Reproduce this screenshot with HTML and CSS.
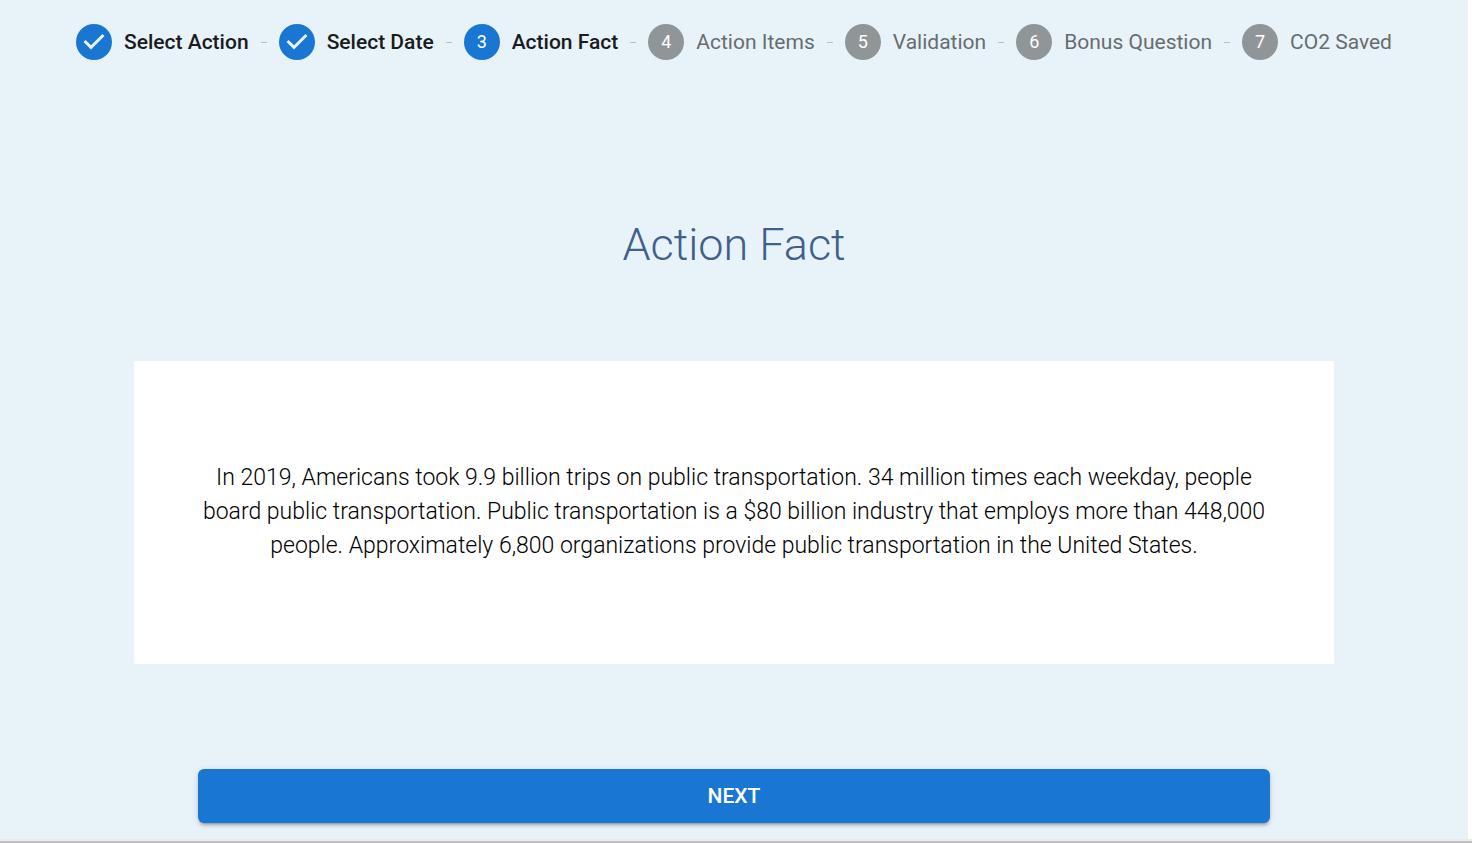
FILE: index.html
```html
<!DOCTYPE html>
<html lang="en">
<head>
<meta charset="utf-8">
<meta name="viewport" content="width=device-width, initial-scale=1">
<title>Action Fact</title>
<link rel="stylesheet" href="styles.css">
</head>
<body>
<div class="page">
  <ol class="stepper">
    <li class="step done">
      <svg class="badge" viewBox="0 0 24 24" role="img" aria-label="Completed"><path d="M12 0a12 12 0 1 0 0 24 12 12 0 0 0 0-24zm-2 17l-5-5 1.400-1.400 3.600 3.600 7.600-7.600L19 8l-9 9z"/></svg>
      <span class="label">Select Action</span>
    </li>
    <li class="connector" aria-hidden="true"></li>
    <li class="step done">
      <svg class="badge" viewBox="0 0 24 24" role="img" aria-label="Completed"><path d="M12 0a12 12 0 1 0 0 24 12 12 0 0 0 0-24zm-2 17l-5-5 1.400-1.400 3.600 3.600 7.600-7.600L19 8l-9 9z"/></svg>
      <span class="label">Select Date</span>
    </li>
    <li class="connector" aria-hidden="true"></li>
    <li class="step active" aria-current="step"><span class="badge number">3</span><span class="label">Action Fact</span></li>
    <li class="connector" aria-hidden="true"></li>
    <li class="step"><span class="badge number">4</span><span class="label">Action Items</span></li>
    <li class="connector" aria-hidden="true"></li>
    <li class="step"><span class="badge number">5</span><span class="label">Validation</span></li>
    <li class="connector" aria-hidden="true"></li>
    <li class="step"><span class="badge number">6</span><span class="label">Bonus Question</span></li>
    <li class="connector" aria-hidden="true"></li>
    <li class="step"><span class="badge number">7</span><span class="label">CO2 Saved</span></li>
  </ol>
  <main class="content">
    <h1 class="title">Action Fact</h1>
    <section class="card">
      <p class="fact">In 2019, Americans took 9.9 billion trips on public transportation. 34 million times each weekday, people board public transportation. Public transportation is a $80 billion industry that employs more than 448,000 people. Approximately 6,800 organizations provide public transportation in the United States.</p>
    </section>
    <div class="actions"><button class="next" type="button">NEXT</button></div>
  </main>
</div>
<footer class="edge"></footer>
</body>
</html>
```
FILE: styles.css
```css
* { box-sizing: border-box; }
body {
  margin: 0;
  background: #fff;
  font-family: Roboto, "Liberation Sans", sans-serif;
}
.page {
  margin-right: 4px;
  padding: 24px 64px 16px;
  background: #e8f3f9;
}
.stepper {
  display: flex;
  align-items: center;
  margin: 0;
  padding: 0;
  list-style: none;
}
.step {
  display: flex;
  align-items: center;
  gap: 12px;
  padding: 0 12px;
  color: #666c6f;
  font-size: 21px;
  font-weight: 400;
  line-height: 30px;
  white-space: nowrap;
}
.done, .active { color: #1a1b1c; font-weight: 500; }
.badge { flex: none; width: 36px; height: 36px; }
svg.badge { display: block; fill: #1976d2; }
.number {
  display: flex;
  align-items: center;
  justify-content: center;
  border-radius: 50%;
  background: #909698;
  color: #fff;
  font-size: 18px;
  font-weight: 400;
}
.active .number { background: #1976d2; }
.connector { flex: 1; height: 1px; background: #bdbdbd; }
.content { max-width: 1200px; margin: 0 auto; text-align: center; }
.title {
  margin: 0;
  padding: 158px 0 90px;
  color: #415f8c;
  font-size: 45px;
  font-weight: 300;
  line-height: 53px;
}
.card { padding: 100px 64px 101px; background: #fff; }
.fact {
  margin: 0;
  color: #000;
  font-size: 23px;
  font-weight: 300;
  line-height: 34px;
}
.actions { padding: 105px 64px 0; }
.next {
  display: block;
  width: 100%;
  height: 54px;
  border: 0;
  border-radius: 6px;
  background: #1976d2;
  box-shadow: 0 4px 2px -3px rgba(0,0,0,.2), 0 3px 3px rgba(0,0,0,.14), 0 1px 7px rgba(0,0,0,.12);
  color: #fff;
  font-family: inherit;
  font-size: 21px;
  font-weight: 500;
}
.edge { height: 4px; border-top: 2px solid #ebebeb; background: #c0c0c0; }
```
